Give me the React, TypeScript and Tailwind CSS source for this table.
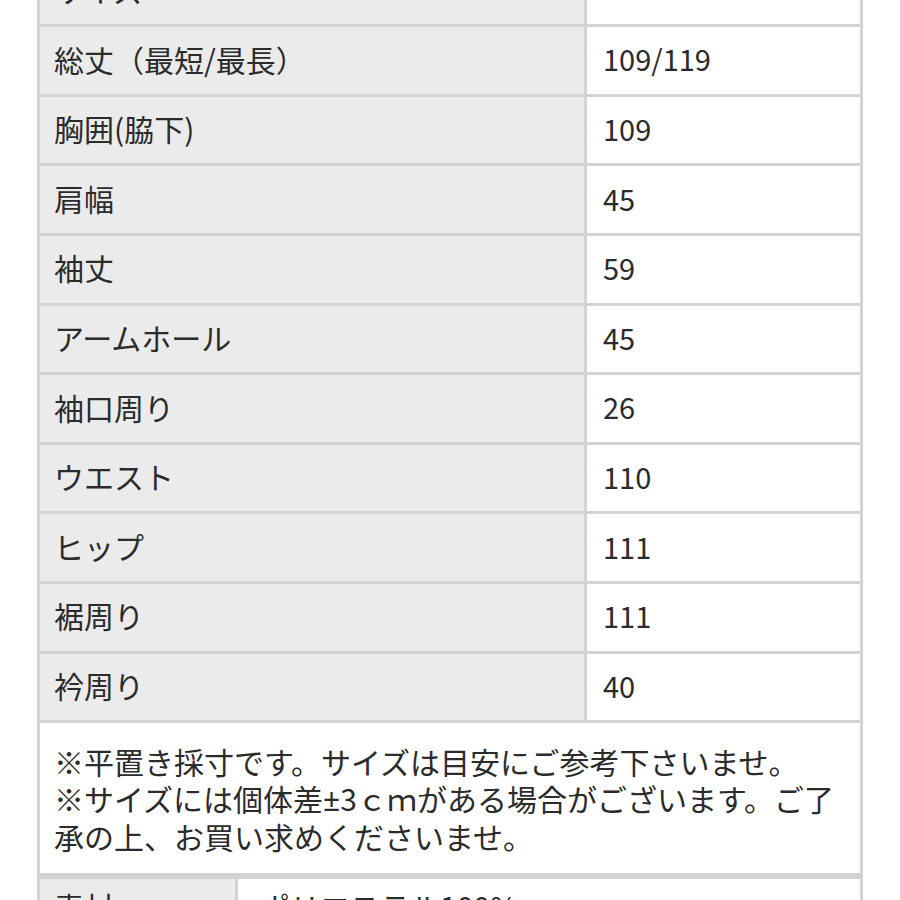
const rows: [string, string][] = [
  ["サイズ", ""],
  ["総丈（最短/最長）", "109/119"],
  ["胸囲(脇下)", "109"],
  ["肩幅", "45"],
  ["袖丈", "59"],
  ["アームホール", "45"],
  ["袖口周り", "26"],
  ["ウエスト", "110"],
  ["ヒップ", "111"],
  ["裾周り", "111"],
  ["衿周り", "40"],
];

function SizeRow({ label, value }: { label: string; value: string }) {
  return (
    <div className="flex h-[69.6px] border-b-[3px] border-[#d3d3d3]">
      <div className="flex w-[547px] items-center border-r-[3px] border-[#d3d3d3] bg-[#ebebeb] pb-[3px] pl-[14px]">
        {label}
      </div>
      <div className="flex flex-1 items-center pb-[3px] pl-[16px] text-[29px]">{value}</div>
    </div>
  );
}

export default function App() {
  return (
    <div className="h-[900px] overflow-hidden bg-white font-['Noto_Sans_CJK_JP',sans-serif] text-[30px] text-[#2b2b2b]">
      <div className="mx-[37px] -mt-[42.3px] border-x-[3px] border-[#d3d3d3]">
        {rows.map(([label, value]) => (
          <SizeRow key={label} label={label} value={value} />
        ))}

        {/* notes */}
        <div className="border-b-[3px] border-[#d3d3d3] pt-[20px] pr-[8px] pb-[18px] pl-[14px] leading-[36.5px]">
          <p>※平置き採寸です。サイズは目安にご参考下さいませ。</p>
          <p>
            ※サイズには個体差<span className="font-['Noto_Sans',sans-serif]">±</span>3ｃｍがある場合がございます。ご了承の上、お買い求めくださいませ。
          </p>
        </div>

        <div className="flex h-[69.6px] border-t-[3px] border-b-[3px] border-[#d3d3d3]">
          <div className="flex w-[198px] items-center border-r-[3px] border-[#d3d3d3] bg-[#ebebeb] pb-[8px] pl-[14px]">
            素材
          </div>
          <div className="flex flex-1 items-center pb-[8px] pl-[22px]">ポリエステル100%</div>
        </div>
      </div>
    </div>
  );
}
